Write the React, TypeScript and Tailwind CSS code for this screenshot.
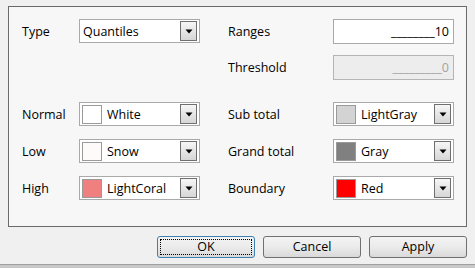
const font = { fontFamily: '"Open Sans", "Noto Sans", sans-serif' };

function DropButton() {
  return (
    <div className="flex h-[20px] w-[17px] items-center justify-center border border-[#6f6f6f] bg-gradient-to-b from-[#f6f6f6] to-[#d6d6d6]">
      <svg width="8" height="5" viewBox="0 0 8 5">
        <path d="M0.5 0.5 H7.5 L4 4.5 Z" fill="#000" />
      </svg>
    </div>
  );
}

function Combo({ text, swatch }: { text: string; swatch?: string }) {
  return (
    <div className="flex h-[24px] w-[121px] items-center border border-[#a9a9a9] bg-white pl-[2px] pr-[2px]">
      {swatch && (
        <div
          className="mr-[5px] h-[19px] w-[20px] border border-[#9a9a9a]"
          style={{ backgroundColor: swatch }}
        />
      )}
      <span className={`flex-1 pt-[2px] text-[12.5px] leading-none text-black ${swatch ? "" : "pl-[1px]"}`}>{text}</span>
      <DropButton />
    </div>
  );
}

function Masked({ text, disabled }: { text: string; disabled?: boolean }) {
  return (
    <div
      className={`flex h-[25px] w-[121px] items-center justify-end border pr-[4px] pt-[2px] text-[12.5px] leading-none ${
        disabled ? "border-[#b5b5b5] bg-[#ededed] text-[#a3a3a3]" : "border-[#a9a9a9] bg-white text-black"
      }`}
    >
      {text}
    </div>
  );
}

function Row({
  left,
  leftCtl,
  right,
  rightCtl,
  mt,
}: {
  left?: string;
  leftCtl?: React.ReactNode;
  right: string;
  rightCtl: React.ReactNode;
  mt: string;
}) {
  return (
    <div className={`flex h-[24px] items-center ${mt}`}>
      <div className="w-[57px] pt-[3px] text-[12.5px] text-black">{left}</div>
      <div className="w-[121px]">{leftCtl}</div>
      <div className="w-[28px]" />
      <div className="w-[105px] pt-[3px] text-[12.5px] text-black">{right}</div>
      {rightCtl}
    </div>
  );
}

function Btn({ label, primary }: { label: string; primary?: boolean }) {
  return (
    <div
      className={`flex h-[22px] w-[98px] items-center justify-center rounded-[3px] border bg-gradient-to-b from-[#f3f3f3] via-[#ebebeb] to-[#d9d9d9] text-[12.5px] text-black ${
        primary ? "border-[#3c7fb1] p-[2px]" : "border-[#707070]"
      }`}
    >
      {primary ? (
        <div className="flex h-full w-full items-center justify-center border border-dotted border-black">
          {label}
        </div>
      ) : (
        label
      )}
    </div>
  );
}

export default function App() {
  return (
    <div className="flex h-[268px] w-[475px] flex-col overflow-hidden bg-[#f0f0f0]" style={font}>
      <div className="ml-[8px] mt-[6px] h-[221px] w-[459px] border border-[#6a6a6a] bg-[#f7f7f7] pl-[13px] pt-[12px]">
        <Row left="Type" leftCtl={<Combo text="Quantiles" />} right="Ranges" rightCtl={<Masked text="________10" />} mt="" />
        <Row right="Threshold" rightCtl={<Masked text="_________0" disabled />} mt="mt-[12px]" />
        <Row
          left="Normal"
          leftCtl={<Combo text="White" swatch="#ffffff" />}
          right="Sub total"
          rightCtl={<Combo text="LightGray" swatch="#d3d3d3" />}
          mt="mt-[23px]"
        />
        <Row
          left="Low"
          leftCtl={<Combo text="Snow" swatch="#fffafa" />}
          right="Grand total"
          rightCtl={<Combo text="Gray" swatch="#808080" />}
          mt="mt-[13px]"
        />
        <Row
          left="High"
          leftCtl={<Combo text="LightCoral" swatch="#f08080" />}
          right="Boundary"
          rightCtl={<Combo text="Red" swatch="#ff0000" />}
          mt="mt-[13px]"
        />
      </div>
      <div className="mt-[9px] flex justify-end gap-[8px] pr-[8px]">
        <Btn label="OK" primary />
        <Btn label="Cancel" />
        <Btn label="Apply" />
      </div>
      <div className="mt-[6px] h-[4px] border-t border-[#a0a0a0] bg-[#c8c8c8]" />
    </div>
  );
}
